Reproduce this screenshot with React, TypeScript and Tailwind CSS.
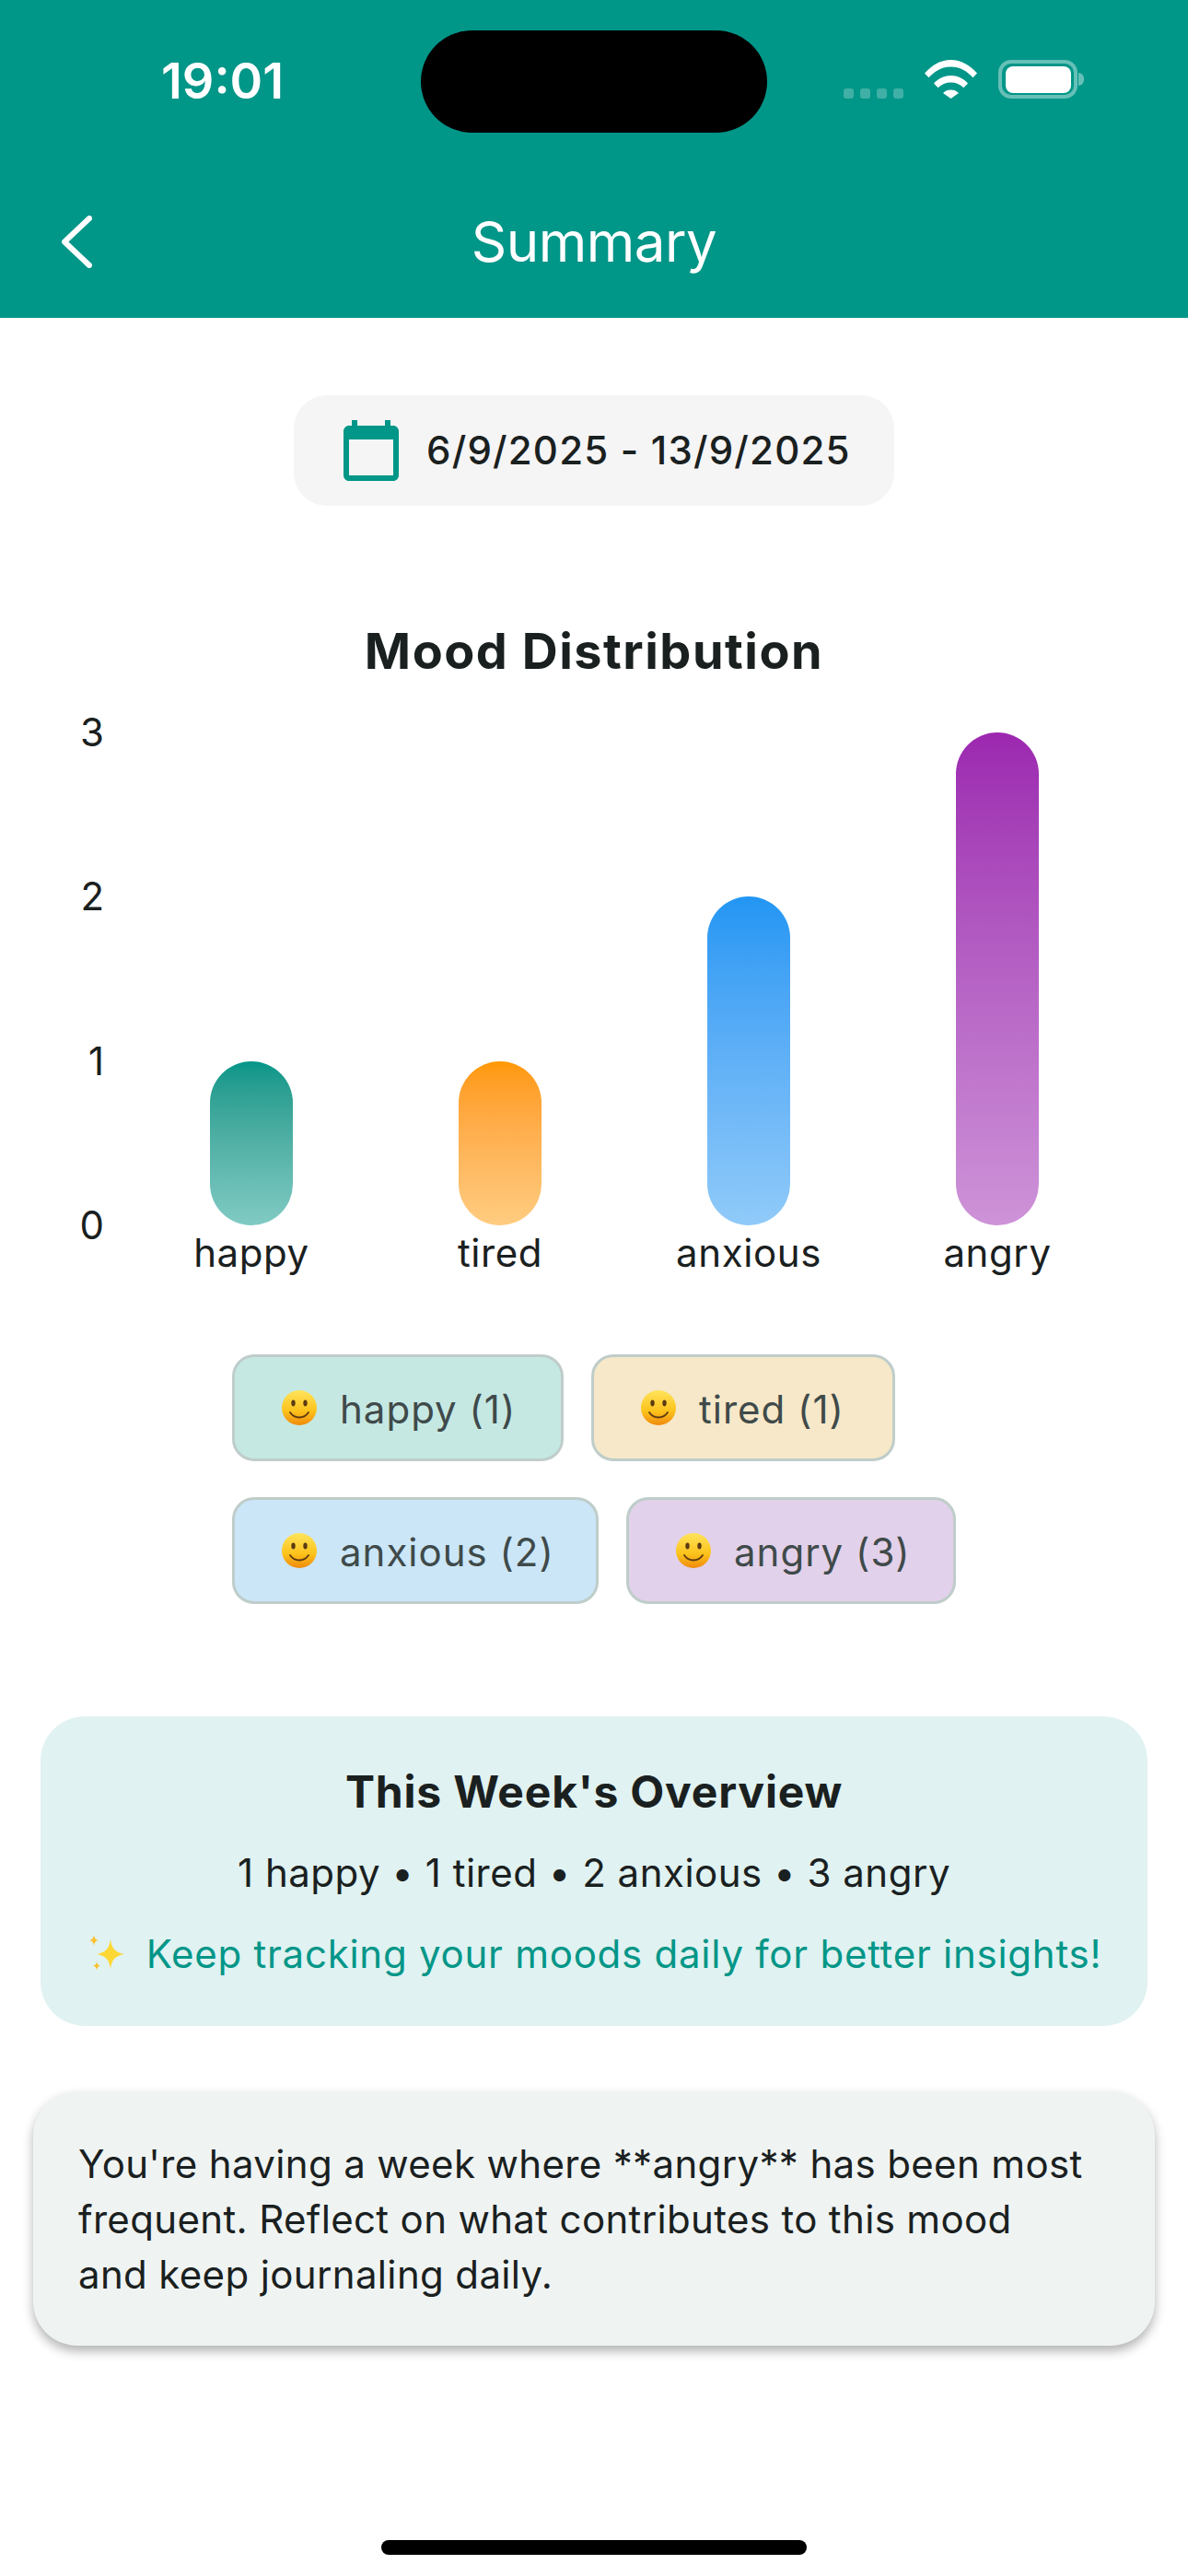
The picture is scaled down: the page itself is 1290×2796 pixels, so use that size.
const moods = [
  { name: "happy", count: 1, bar: "from-[#009688] to-[#80cbc4]", chip: "bg-[#c5e8e3]", chipWidth: "w-[360px]" },
  { name: "tired", count: 1, bar: "from-[#ff9800] to-[#ffcc80]", chip: "bg-[#f6e8c8]", chipWidth: "w-[330px]" },
  { name: "anxious", count: 2, bar: "from-[#2196f3] to-[#90caf9]", chip: "bg-[#cbe6f7]", chipWidth: "w-[398px]" },
  { name: "angry", count: 3, bar: "from-[#9c27b0] to-[#ce93d8]", chip: "bg-[#e2d1ea]", chipWidth: "w-[358px]" },
];

const UNIT_HEIGHT = 178.3;

function Smiley() {
  return (
    <svg viewBox="0 0 40 40" className="h-[40px] w-[40px] shrink-0">
      <defs>
        <linearGradient id="face" x1="0" y1="0" x2="0" y2="1">
          <stop offset="0" stopColor="#ffe45c" />
          <stop offset="0.6" stopColor="#fcc21b" />
          <stop offset="1" stopColor="#f08a0c" />
        </linearGradient>
      </defs>
      <circle cx="20" cy="20" r="19" fill="url(#face)" />
      <ellipse cx="13.5" cy="15" rx="2.2" ry="3.4" fill="#5b3a12" />
      <ellipse cx="26.5" cy="15" rx="2.2" ry="3.4" fill="#5b3a12" />
      <path d="M10 25c3 4.5 6.500 5.500 10 5.500s7-1 10-5.500" fill="none" stroke="#5b3a12" strokeWidth="1.800" strokeLinecap="round" />
    </svg>
  );
}

function Sparkles() {
  return (
    <svg viewBox="0 0 44 44" className="h-[44px] w-[44px] shrink-0">
      <path d="M26 6c1.500 10 5 14 15 16-10 2-13.500 6-15 16-1.500-10-5-14-15-16 10-2 13.500-6 15-16z" fill="#fdd835" />
      <path d="M8 1c.6 4 2 5.500 5 6-3 .6-4.400 2-5 6-.6-4-2-5.400-5-6 3-.5 4.400-2 5-6z" fill="#fbc02d" />
      <path d="M11 30c.5 3 1.500 4.200 4 4.700-2.500.5-3.500 1.700-4 4.700-.5-3-1.500-4.200-4-4.700 2.500-.5 3.500-1.700 4-4.700z" fill="#fbc02d" />
    </svg>
  );
}

function StatusBar() {
  return (
    <div className="flex h-[177px] items-start">
      <div className="ml-[175px] mt-[58px] w-[282px] text-[54px] font-semibold leading-[60px] text-white">19:01</div>
      <div className="mt-[33px] h-[111px] w-[376px] rounded-full bg-black" />
      <div className="ml-[83px] mt-[65px] flex h-[42px] items-end">
        <div className="flex gap-[7px]">
          {[0, 1, 2, 3].map((i) => (
            <div key={i} className="h-[11px] w-[11px] rounded-[3px] bg-white/25" />
          ))}
        </div>
        <svg viewBox="0 0 57 42" className="ml-[23px] h-[42px] w-[57px]">
          <path d="M0 14.500C8 5.500 17.500 0 28.500 0S49 5.500 57 14.500l-4.500 4.800C46 12 38 7.500 28.500 7.500S11 12 4.500 19.300z" fill="#fff" />
          <path d="M10 25.500C15 20 21 17 28.500 17S42 20 47 25.500l-4.600 4.800C38.500 26.500 34 24.500 28.500 24.500s-10 2-13.900 5.800z" fill="#fff" />
          <path d="M20 36c2.500-2.500 5-3.600 8.500-3.600S34.500 33.500 37 36l-8.500 6z" fill="#fff" />
        </svg>
        <div className="ml-[23px] flex items-center">
          <div className="flex h-[42px] w-[86px] items-center justify-center rounded-[14px] border-[4px] border-white/40">
            <div className="h-[29px] w-[71px] rounded-[8px] bg-white" />
          </div>
          <div className="ml-[1px] h-[14px] w-[6px] rounded-r-full bg-white/40" />
        </div>
      </div>
    </div>
  );
}

export default function App() {
  return (
    <div className="relative flex h-[2796px] w-[1290px] flex-col overflow-hidden bg-white font-['Inter',sans-serif] text-[#1a2020]">
      <header className="h-[345px] shrink-0 bg-[#009688]">
        <StatusBar />
        <div className="mt-[43px] grid h-[84px] grid-cols-[1fr_auto_1fr] items-center">
          <svg viewBox="0 0 33 57" className="ml-[67px] h-[57px] w-[33px]" fill="none" stroke="#fff" strokeWidth="6" strokeLinecap="round" strokeLinejoin="round">
            <path d="M30 3 3 28.500 30 54" />
          </svg>
          <h1 className="text-[60px] font-normal leading-[84px] tracking-[-0.5px] text-white">Summary</h1>
        </div>
      </header>

      <div className="mt-[84px] flex justify-center">
        <div className="flex h-[120px] w-[652px] items-center gap-[24px] rounded-[36px] bg-[#f5f5f5] pl-[48px]">
          <svg viewBox="0 0 24 24" className="h-[72px] w-[72px] shrink-0" fill="#009688">
            <path d="M20 3h-1V1h-2v2H7V1H5v2H4c-1.100 0-2 .9-2 2v16c0 1.100.9 2 2 2h16c1.100 0 2-.9 2-2V5c0-1.100-.9-2-2-2zm0 18H4V8h16v13z" />
          </svg>
          <span className="whitespace-nowrap text-[42px] font-medium leading-none tracking-[1.2px]">6/9/2025 - 13/9/2025</span>
        </div>
      </div>

      <h2 className="mt-[126px] text-center text-[54px] font-bold leading-[64px] tracking-[1.5px]">Mood Distribution</h2>

      <div className="mt-[56px] flex pl-[60px]">
        <div className="flex h-[535px] w-[78px] flex-col items-start justify-between">
          {[3, 2, 1, 0].map((n) => (
            <div key={n} className="flex h-0 w-[53px] items-center justify-end text-[42px] leading-none">{n}</div>
          ))}
        </div>
        <div className="grid w-[1080px] grid-cols-4">
          {moods.map((m) => (
            <div key={m.name} className="flex flex-col items-center">
              <div className="flex h-[535px] items-end">
                <div
                  className={`w-[90px] rounded-[45px] bg-gradient-to-b ${m.bar}`}
                  style={{ height: m.count * UNIT_HEIGHT }}
                />
              </div>
              <span className="mt-[6px] text-[42px] leading-[48px] tracking-[0.6px]">{m.name}</span>
            </div>
          ))}
        </div>
      </div>

      <div className="mx-auto mt-[86px] flex w-[786px] flex-wrap gap-x-[30px] gap-y-[39px]">
        {moods.map((m) => (
          <div
            key={m.name}
            className={`flex h-[116px] items-center gap-[24px] rounded-[24px] border-[3px] border-[#bfcdca] pl-[50px] ${m.chip} ${m.chipWidth}`}
          >
            <Smiley />
            <span className="mt-[3px] whitespace-nowrap text-[42px] font-normal leading-none tracking-[1px] text-[#3f4a4a]">
              {m.name} ({m.count})
            </span>
          </div>
        ))}
      </div>

      <section className="mx-[44px] mt-[122px] flex h-[336px] flex-col items-center rounded-[48px] bg-[#e0f2f1] pt-[52px]">
        <h3 className="text-[48px] font-bold leading-[60px] tracking-[0.8px]">This Week's Overview</h3>
        <p className="mt-[32px] text-[42px] leading-[52px] tracking-[0.5px]">1 happy • 1 tired • 2 anxious • 3 angry</p>
        <div className="mt-[36px] flex items-center gap-[21px]">
          <Sparkles />
          <span className="whitespace-nowrap text-[42px] leading-[52px] tracking-[0.75px] text-[#009688]">
            Keep tracking your moods daily for better insights!
          </span>
        </div>
      </section>

      <section className="mx-[36px] mt-[71px] h-[276px] rounded-[48px] bg-[#eff4f3] pl-[49px] pr-[72px] pt-[49px] shadow-[0_6px_12px_rgba(0,0,0,0.3)]">
        <p className="text-[42px] leading-[60px] tracking-[0.35px]">
          You're having a week where **angry** has been most frequent. Reflect on what contributes to this mood and keep journaling daily.
        </p>
      </section>

      {/* home indicator sits over the page */}
      <div className="absolute bottom-[23px] left-[414px] h-[16px] w-[462px] rounded-full bg-black" />
    </div>
  );
}
